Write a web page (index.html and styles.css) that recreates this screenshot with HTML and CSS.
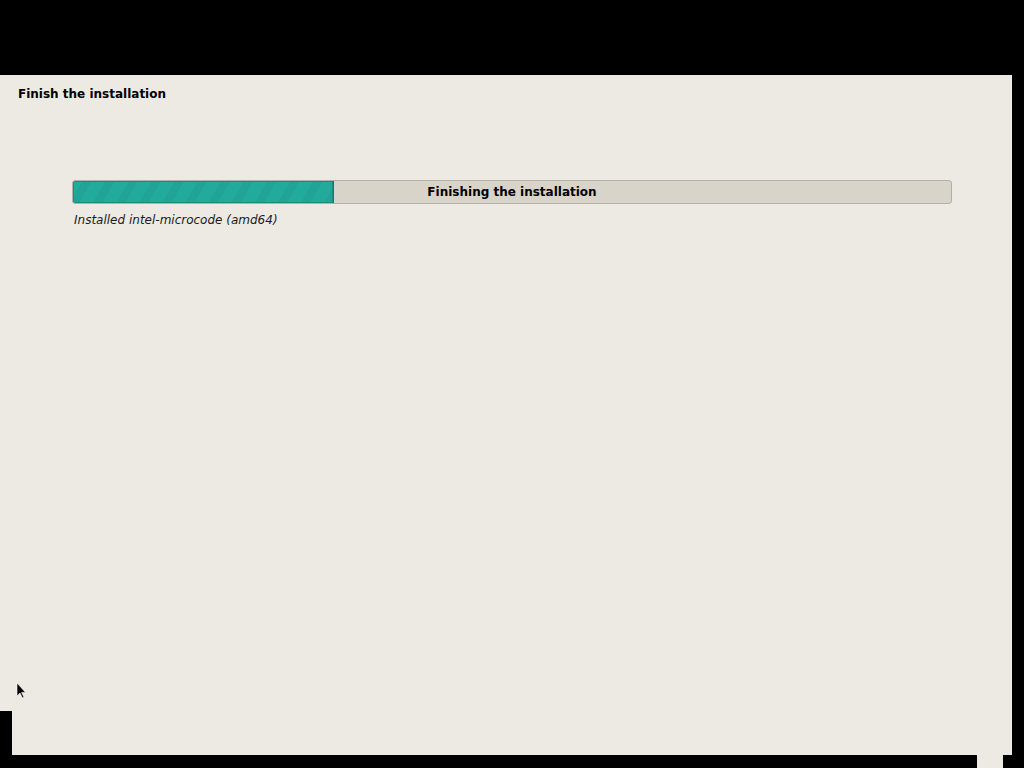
FILE: index.html
```html
<!DOCTYPE html>
<html lang="en">
<head>
    <meta charset="UTF-8">
    <title>Finish the installation</title>
    <link rel="stylesheet" href="styles.css">
</head>
<body>
    <div class="screen">
        <div class="panel">
            <h1 class="step-title">Finish the installation</h1>
            <div class="progress-area">
                <div class="progress">
                    <div class="progress-fill" style="width: 29.7%"></div>
                    <span class="progress-label">Finishing the installation</span>
                </div>
                <p class="progress-info">Installed intel-microcode (amd64)</p>
            </div>
        </div>
        <div class="panel-foot"></div>
        <div class="panel-tab"></div>

        <svg class="cursor" width="12" height="18" viewBox="0 0 12 18">
            <path d="M1 1 L1 14 L4 11 L6.5 16 L8 15.3 L5.6 10.4 L9.5 10.4 Z" fill="#000" stroke="#fff" stroke-width="0.6"/>
        </svg>
    </div>
</body>
</html>
```

FILE: styles.css
```css
body {
    margin: 0;
    padding: 0;
    background-color: #000;
    font-family: "DejaVu Sans", sans-serif;
    color: #000;
}

.screen {
    position: relative;
    width: 1024px;
    height: 768px;
    padding-top: 75px;
    box-sizing: border-box;
    overflow: hidden;
}

.panel {
    width: 1012px;
    height: 636px;
    background-color: #edeae4;
    padding: 12px 0 0 18px;
    box-sizing: border-box;
}

.panel-foot {
    width: 1000px;
    height: 44px;
    margin-left: 12px;
    background-color: #edeae4;
}

.panel-tab {
    width: 26px;
    height: 13px;
    margin-left: 977px;
    background-color: #edeae4;
}

.step-title {
    margin: 0;
    font-size: 12px;
    font-weight: bold;
    line-height: 15px;
}

.progress-area {
    margin: 78px 0 0 54px;
    width: 880px;
}

.progress {
    position: relative;
    height: 24px;
    background-color: #d9d4c9;
    border: 1px solid #b5b1a8;
    border-radius: 3px;
    box-sizing: border-box;
    overflow: hidden;
}

.progress-fill {
    height: 100%;
    background-color: #22aa9b;
    background-image: repeating-linear-gradient(-60deg, rgba(0, 0, 0, 0.035) 0 8px, rgba(0, 0, 0, 0) 8px 20px);
    border-right: 1px solid #17786d;
    box-shadow: inset 0 0 0 1px #1a8c80;
    border-radius: 2px 0 0 2px;
    box-sizing: border-box;
}

.progress-label {
    position: absolute;
    left: 0;
    right: 0;
    top: 0;
    line-height: 22px;
    text-align: center;
    font-size: 12px;
    font-weight: bold;
}

.progress-info {
    margin: 8px 0 0 2px;
    font-size: 12px;
    font-style: italic;
    line-height: 16px;
    color: #1a1a1a;
}

.cursor {
    position: absolute;
    left: 16px;
    top: 682px;
}
```
